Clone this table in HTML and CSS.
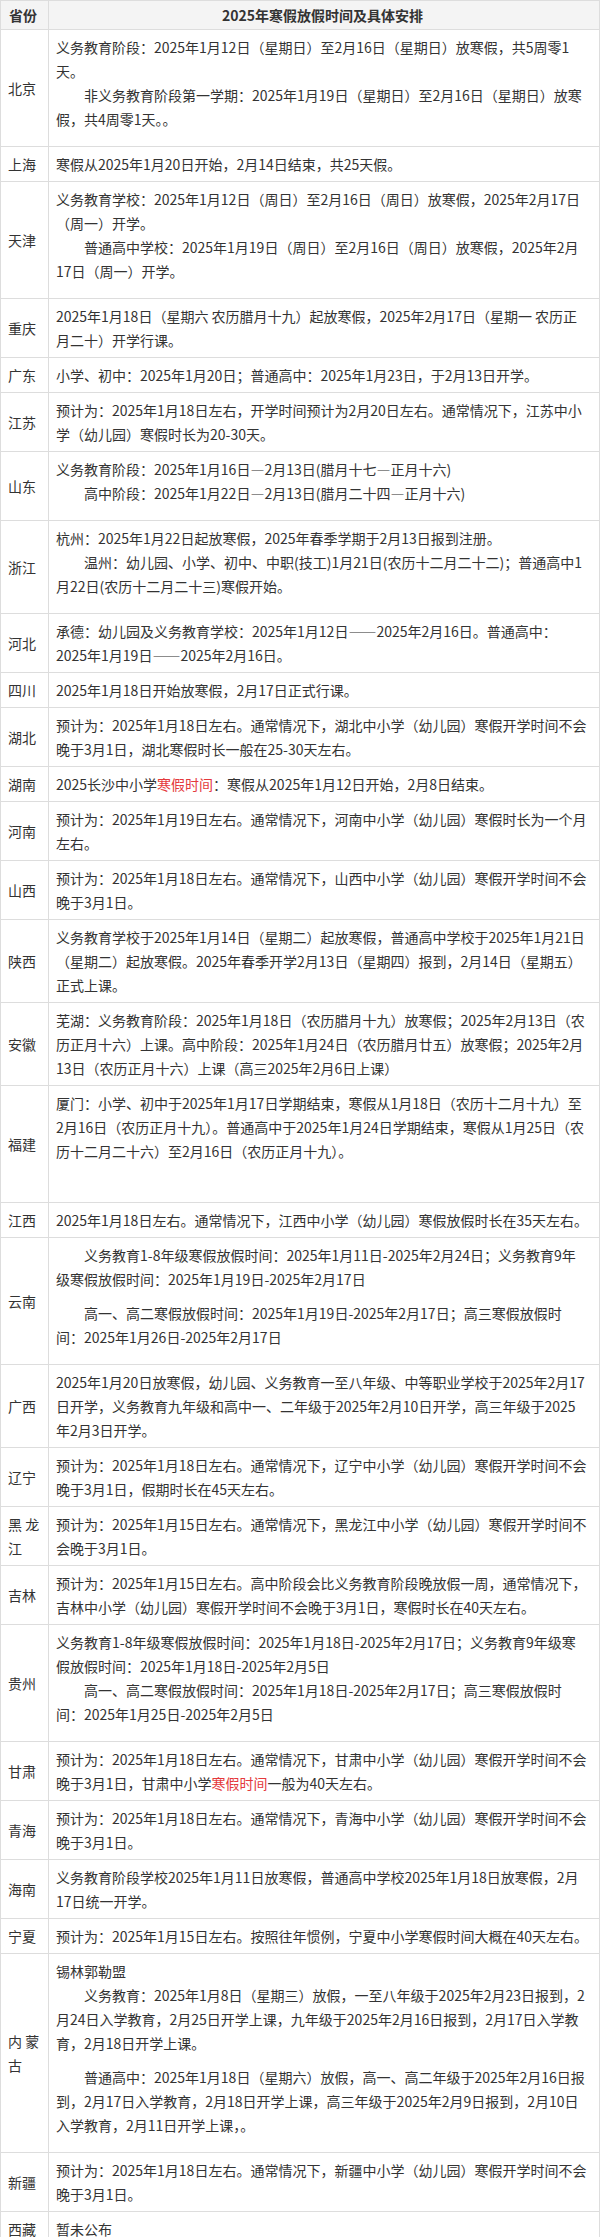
FILE: index.html
```html
<!DOCTYPE html>
<html lang="zh-CN">
<head>
<meta charset="utf-8">
<title>2025年寒假放假时间及具体安排</title>
<link rel="stylesheet" href="styles.css">
</head>
<body>
<table class="holiday">
  <colgroup><col class="c1"><col class="c2"></colgroup>
  <thead>
    <tr><th>省份</th><th>2025年寒假放假时间及具体安排</th></tr>
  </thead>
  <tbody>
    <tr><td class="prov">北京</td><td><p>义务教育阶段：2025年1月12日（星期日）至2月16日（星期日）放寒假，共5周零1天。</p><p class="ind">非义务教育阶段第一学期：2025年1月19日（星期日）至2月16日（星期日）放寒假，共4周零1天。。</p></td></tr>
    <tr><td class="prov">上海</td><td>寒假从2025年1月20日开始，2月14日结束，共25天假。</td></tr>
    <tr><td class="prov">天津</td><td><p>义务教育学校：2025年1月12日（周日）至2月16日（周日）放寒假，2025年2月17日（周一）开学。</p><p class="ind">普通高中学校：2025年1月19日（周日）至2月16日（周日）放寒假，2025年2月17日（周一）开学。</p></td></tr>
    <tr><td class="prov">重庆</td><td>2025年1月18日（星期六 农历腊月十九）起放寒假，2025年2月17日（星期一 农历正月二十）开学行课。</td></tr>
    <tr><td class="prov">广东</td><td>小学、初中：2025年1月20日；普通高中：2025年1月23日，于2月13日开学。</td></tr>
    <tr><td class="prov">江苏</td><td>预计为：2025年1月18日左右，开学时间预计为2月20日左右。通常情况下，江苏中小学（幼儿园）寒假时长为20-30天。</td></tr>
    <tr><td class="prov">山东</td><td><p>义务教育阶段：2025年1月16日—2月13日(腊月十七—正月十六)</p><p class="ind">高中阶段：2025年1月22日—2月13日(腊月二十四—正月十六)</p></td></tr>
    <tr><td class="prov">浙江</td><td><p>杭州：2025年1月22日起放寒假，2025年春季学期于2月13日报到注册。</p><p class="ind">温州：幼儿园、小学、初中、中职(技工)1月21日(农历十二月二十二)；普通高中1月22日(农历十二月二十三)寒假开始。</p></td></tr>
    <tr><td class="prov">河北</td><td>承德：幼儿园及义务教育学校：2025年1月12日——2025年2月16日。普通高中：<span class="nw">2025年1月19日——2025年2月16日。</span></td></tr>
    <tr><td class="prov">四川</td><td>2025年1月18日开始放寒假，2月17日正式行课。</td></tr>
    <tr><td class="prov">湖北</td><td>预计为：2025年1月18日左右。通常情况下，湖北中小学（幼儿园）寒假开学时间不会晚于3月1日，湖北寒假时长一般在25-30天左右。</td></tr>
    <tr><td class="prov">湖南</td><td>2025长沙中小学<span class="hl">寒假时间</span>：寒假从2025年1月12日开始，2月8日结束。</td></tr>
    <tr><td class="prov">河南</td><td>预计为：2025年1月19日左右。通常情况下，河南中小学（幼儿园）寒假时长为一个月左右。</td></tr>
    <tr><td class="prov">山西</td><td>预计为：2025年1月18日左右。通常情况下，山西中小学（幼儿园）寒假开学时间不会晚于3月1日。</td></tr>
    <tr><td class="prov">陕西</td><td>义务教育学校于2025年1月14日（星期二）起放寒假，普通高中学校于2025年1月21日（星期二）起放寒假。2025年春季开学2月13日（星期四）报到，2月14日（星期五）正式上课。</td></tr>
    <tr><td class="prov">安徽</td><td>芜湖：义务教育阶段：2025年1月18日（农历腊月十九）放寒假；2025年2月13日（农历正月十六）上课。高中阶段：2025年1月24日（农历腊月廿五）放寒假；2025年2月13日（农历正月十六）上课（高三2025年2月6日上课）</td></tr>
    <tr><td class="prov">福建</td><td><p>厦门：小学、初中于2025年1月17日学期结束，寒假从1月18日（农历十二月十九）至2月16日（农历正月十九）。普通高中于2025年1月24日学期结束，寒假从1月25日（农历十二月二十六）至2月16日（农历正月十九）。</p><p class="ind">&nbsp;</p></td></tr>
    <tr><td class="prov">江西</td><td>2025年1月18日左右。通常情况下，江西中小学（幼儿园）寒假放假时长在35天左右。</td></tr>
    <tr><td class="prov">云南</td><td><p class="ind">义务教育1-8年级寒假放假时间：2025年1月11日-2025年2月24日；义务教育9年级寒假放假时间：2025年1月19日-2025年2月17日</p><p class="ind">高一、高二寒假放假时间：2025年1月19日-2025年2月17日；高三寒假放假时间：2025年1月26日-2025年2月17日</p></td></tr>
    <tr><td class="prov">广西</td><td>2025年1月20日放寒假，幼儿园、义务教育一至八年级、中等职业学校于2025年2月17日开学，义务教育九年级和高中一、二年级于2025年2月10日开学，高三年级于2025年2月3日开学。</td></tr>
    <tr><td class="prov">辽宁</td><td>预计为：2025年1月18日左右。通常情况下，辽宁中小学（幼儿园）寒假开学时间不会晚于3月1日，假期时长在45天左右。</td></tr>
    <tr><td class="prov">黑 龙江</td><td>预计为：2025年1月15日左右。通常情况下，黑龙江中小学（幼儿园）寒假开学时间不会晚于3月1日。</td></tr>
    <tr><td class="prov">吉林</td><td>预计为：2025年1月15日左右。高中阶段会比义务教育阶段晚放假一周，通常情况下，吉林中小学（幼儿园）寒假开学时间不会晚于3月1日，寒假时长在40天左右。</td></tr>
    <tr><td class="prov">贵州</td><td><p>义务教育1-8年级寒假放假时间：2025年1月18日-2025年2月17日；义务教育9年级寒假放假时间：2025年1月18日-2025年2月5日</p><p class="ind">高一、高二寒假放假时间：2025年1月18日-2025年2月17日；高三寒假放假时间：2025年1月25日-2025年2月5日</p></td></tr>
    <tr><td class="prov">甘肃</td><td>预计为：2025年1月18日左右。通常情况下，甘肃中小学（幼儿园）寒假开学时间不会晚于3月1日，甘肃中小学<span class="hl">寒假时间</span>一般为40天左右。</td></tr>
    <tr><td class="prov">青海</td><td>预计为：2025年1月18日左右。通常情况下，青海中小学（幼儿园）寒假开学时间不会晚于3月1日。</td></tr>
    <tr><td class="prov">海南</td><td>义务教育阶段学校2025年1月11日放寒假，普通高中学校2025年1月18日放寒假，2月17日统一开学。</td></tr>
    <tr><td class="prov">宁夏</td><td>预计为：2025年1月15日左右。按照往年惯例，宁夏中小学寒假时间大概在40天左右。</td></tr>
    <tr><td class="prov">内 蒙古</td><td><p>锡林郭勒盟</p><p class="ind">义务教育：2025年1月8日（星期三）放假，一至八年级于2025年2月23日报到，2月24日入学教育，2月25日开学上课，九年级于2025年2月16日报到，2月17日入学教育，2月18日开学上课。</p><p class="ind">普通高中：2025年1月18日（星期六）放假，高一、高二年级于2025年2月16日报到，2月17日入学教育，2月18日开学上课，高三年级于2025年2月9日报到，2月10日入学教育，2月11日开学上课，。</p></td></tr>
    <tr><td class="prov">新疆</td><td>预计为：2025年1月18日左右。通常情况下，新疆中小学（幼儿园）寒假开学时间不会晚于3月1日。</td></tr>
    <tr><td class="prov">西藏</td><td>暂未公布</td></tr>
  </tbody>
</table>
</body>
</html>
```

FILE: styles.css
```css
html, body {
  margin: 0;
  padding: 0;
  background: #fff;
}

body {
  font-family: "Noto Sans CJK SC", "Microsoft YaHei", sans-serif;
  font-size: 14px;
  color: #333;
}

.holiday {
  width: 600px;
  border-collapse: collapse;
  table-layout: fixed;
}

.holiday .c1 {
  width: 48px;
}

.holiday th,
.holiday td {
  border: 1px solid #ddd;
  padding: 5px 10px 5px 7px;
  line-height: 24px;
  vertical-align: middle;
  text-align: left;
}

.holiday td.prov {
  padding-right: 7px;
}

.holiday th {
  background: #f4f4f4;
  font-weight: bold;
  text-align: center;
  line-height: 18px;
}

.holiday p {
  margin: 0;
}

.holiday p.ind {
  text-indent: 2em;
  margin-bottom: 10px;
}

.nw {
  white-space: nowrap;
}

.hl {
  color: #e4393c;
}
```
